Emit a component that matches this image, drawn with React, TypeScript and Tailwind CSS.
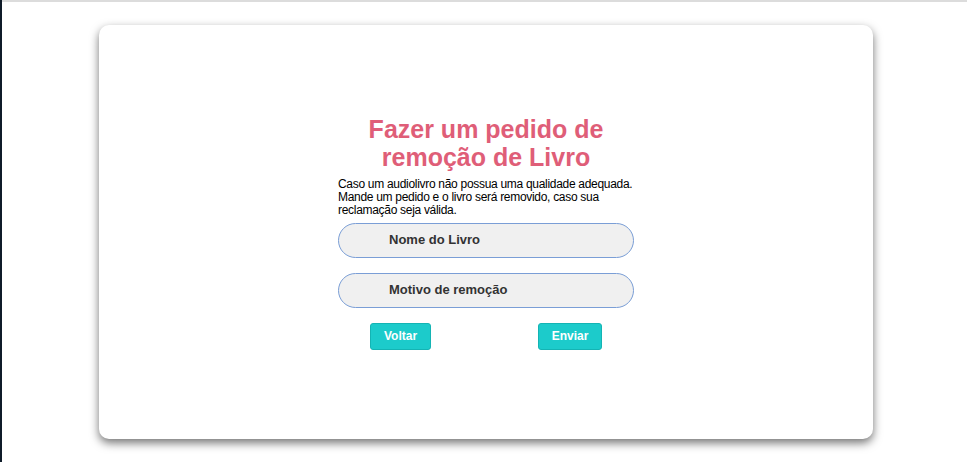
export default function App() {
  return (
    <div className="flex min-h-[462px] w-full bg-white" style={{ fontFamily: '"Liberation Sans", Arial, sans-serif' }}>
      <div className="w-[2px] shrink-0 bg-[#0f1b29]" />
      <div className="flex flex-1 flex-col">
        <div className="h-[2px] bg-[#dcdcdc]" />
        <div className="pl-[97px] pt-[23px]">
          <div className="flex h-[414px] w-[774px] items-center justify-center rounded-[10px] bg-white shadow-[0_4px_10px_rgba(0,0,0,0.55)]">
            <div className="flex w-[296px] flex-col">
              <h1 className="text-center text-[25px] font-bold leading-[28px] text-[#df5e78]">
                Fazer um pedido de<br />remoção de Livro
              </h1>
              <p className="mt-[7px] whitespace-nowrap text-[12px] leading-[13px] tracking-[-0.3px] text-black">
                Caso um audiolivro não possua uma qualidade adequada.<br />
                Mande um pedido e o livro será removido, caso sua<br />
                reclamação seja válida.
              </p>
              <div className="mt-[6px] flex h-[35px] items-center rounded-full border border-[#7a9ed6] bg-[#f0f0f0] pl-[50px] text-[13px] font-bold text-[#333]">
                Nome do Livro
              </div>
              <div className="mt-[15px] flex h-[35px] items-center rounded-full border border-[#7a9ed6] bg-[#f0f0f0] pl-[50px] text-[13px] font-bold text-[#333]">
                Motivo de remoção
              </div>
              <div className="mt-[15px] flex justify-between px-[32px]">
                <button className="h-[27px] w-[61px] rounded-[3px] border border-[#14b4b4] bg-[#1ccbcb] text-[12px] font-bold text-white">
                  Voltar
                </button>
                <button className="h-[27px] w-[64px] rounded-[3px] border border-[#14b4b4] bg-[#1ccbcb] text-[12px] font-bold text-white">
                  Enviar
                </button>
              </div>
            </div>
          </div>
        </div>
      </div>
    </div>
  );
}
